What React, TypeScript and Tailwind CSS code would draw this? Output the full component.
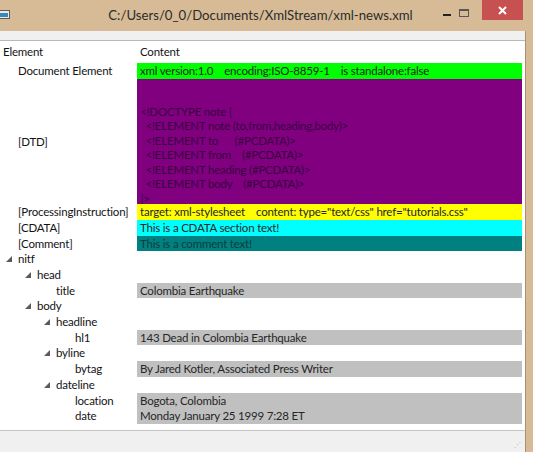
import React from 'react';

type Row = {
  label: string;
  level: number;
  arrow?: boolean;
  bg?: string;
  fg?: string;
  text?: string;
};

const rows: Row[] = [
  { label: 'nitf', level: 0, arrow: true },
  { label: 'head', level: 1, arrow: true },
  { label: 'title', level: 2, bg: 'bg-[#c0c0c0]', text: 'Colombia Earthquake' },
  { label: 'body', level: 1, arrow: true },
  { label: 'headline', level: 2, arrow: true },
  { label: 'hl1', level: 3, bg: 'bg-[#c0c0c0]', text: '143 Dead in Colombia Earthquake' },
  { label: 'byline', level: 2, arrow: true },
  { label: 'bytag', level: 3, bg: 'bg-[#c0c0c0]', text: 'By Jared Kotler, Associated Press Writer' },
  { label: 'dateline', level: 2, arrow: true },
  { label: 'location', level: 3, bg: 'bg-[#c0c0c0]', text: 'Bogota, Colombia' },
  { label: 'date', level: 3, bg: 'bg-[#c0c0c0]', text: 'Monday January 25 1999 7:28 ET' },
];

const dtd = [
  '<!DOCTYPE note [',
  '  <!ELEMENT note (to,from,heading,body)>',
  '  <!ELEMENT to      (#PCDATA)>',
  '  <!ELEMENT from    (#PCDATA)>',
  '  <!ELEMENT heading (#PCDATA)>',
  '  <!ELEMENT body    (#PCDATA)>',
  ']>',
];

const indent = ['pl-[18px]', 'pl-[37px]', 'pl-[56px]', 'pl-[75px]'];

function Arrow() {
  return (
    <svg width="6" height="6" viewBox="0 0 6 6" className="absolute -left-[12px] top-[4px]">
      <polygon points="6,0 6,6 0,6" fill="#5a5a5a" />
    </svg>
  );
}

function Line({ row }: { row: Row }) {
  return (
    <div className="flex h-[15.7px] leading-[15.7px]">
      <div className={`w-[137px] shrink-0 whitespace-nowrap ${indent[row.level]}`}>
        <span className="relative">
          {row.arrow && <Arrow />}
          {row.label}
        </span>
      </div>
      <div className={`flex-1 pl-[3px] whitespace-pre overflow-hidden ${row.bg ?? ''} ${row.fg ?? 'text-[#262626]'}`}>
        {row.text}
      </div>
    </div>
  );
}

export default function App() {
  return (
    <div
      className="w-[533px] h-[452px] overflow-hidden bg-[#d6bb96] flex flex-col text-[#141414]"
      style={{ fontFamily: 'Lato, "Noto Sans", sans-serif' }}
    >
      {/* title bar */}
      <div className="h-[31px] shrink-0 relative">
        <div className="absolute left-0 top-[10px] w-[10px] h-[9px] bg-[#e8e8e8] border border-[#5b5b5b] border-l-0">
          <div className="mt-[2px] h-[4px] w-[8px] bg-[#3a86b8]" />
        </div>
        <div className="text-center text-[13.2px] leading-[31px] text-[#2b2b2b] pl-[8px] pr-[20px]">
          C:/Users/0_0/Documents/XmlStream/xml-news.xml
        </div>
        <div className="w-[8px] h-[2px] bg-[#222] absolute left-[443px] top-[14px]" />
        <div className="w-[10px] h-[8px] border border-[#555] border-t-2 absolute left-[459px] top-[9px]" />
        <div className="absolute left-[482px] top-0 w-[41px] h-[20px] bg-[#c75050] flex items-center justify-center">
          <svg width="9" height="9" viewBox="0 0 9 9">
            <path d="M1 1L8 8M8 1L1 8" stroke="#fff" strokeWidth="2" />
          </svg>
        </div>
      </div>

      <div className="flex-1 flex">
        <div className="w-[526px] bg-white flex flex-col border-r border-[#a89070] text-[11.5px] tracking-[-0.2px]">
          <div className="h-[10px] bg-[#f0f0f0] border-b border-[#b9b9b9]" />
          <div className="flex-1 flex flex-col">
            <div className="flex h-[22px] items-center">
              <div className="w-[137px] pl-[3px]">Element</div>
              <div className="pl-[3px]">Content</div>
            </div>
            <div className="pr-[3px]">
              <Line
                row={{
                  label: 'Document Element',
                  level: 0,
                  bg: 'bg-[#00ff00]',
                  text: 'xml version:1.0    encoding:ISO-8859-1    is standalone:false',
                }}
              />
              <div className="flex h-[125.6px]">
                <div className="w-[137px] shrink-0 pl-[18px] flex items-center">[DTD]</div>
                <div className="flex-1 bg-[#800080] text-[#3a0040] pl-[3px] pt-[26px] overflow-hidden whitespace-pre leading-[14.5px]">
                  {dtd.map((l, i) => (
                    <div key={i} className="h-[14.5px]">{l}</div>
                  ))}
                </div>
              </div>
              <Line
                row={{
                  label: '[ProcessingInstruction]',
                  level: 0,
                  bg: 'bg-[#ffff00]',
                  text: 'target: xml-stylesheet    content: type="text/css" href="tutorials.css"',
                }}
              />
              <Line row={{ label: '[CDATA]', level: 0, bg: 'bg-[#00ffff]', text: 'This is a CDATA section text!' }} />
              <Line
                row={{
                  label: '[Comment]',
                  level: 0,
                  bg: 'bg-[#008080]',
                  fg: 'text-[#0e3d3d]',
                  text: 'This is a comment text!',
                }}
              />
              {rows.map((r) => (
                <Line key={r.label} row={r} />
              ))}
            </div>
          </div>
          <div className="h-[22px] bg-[#f0f0f0] border-t border-[#c4c4c4] relative">
            <div className="absolute right-[4px] bottom-[4px] text-[7px] text-[#b0b0b0] leading-none">⋰</div>
          </div>
        </div>
      </div>
    </div>
  );
}
